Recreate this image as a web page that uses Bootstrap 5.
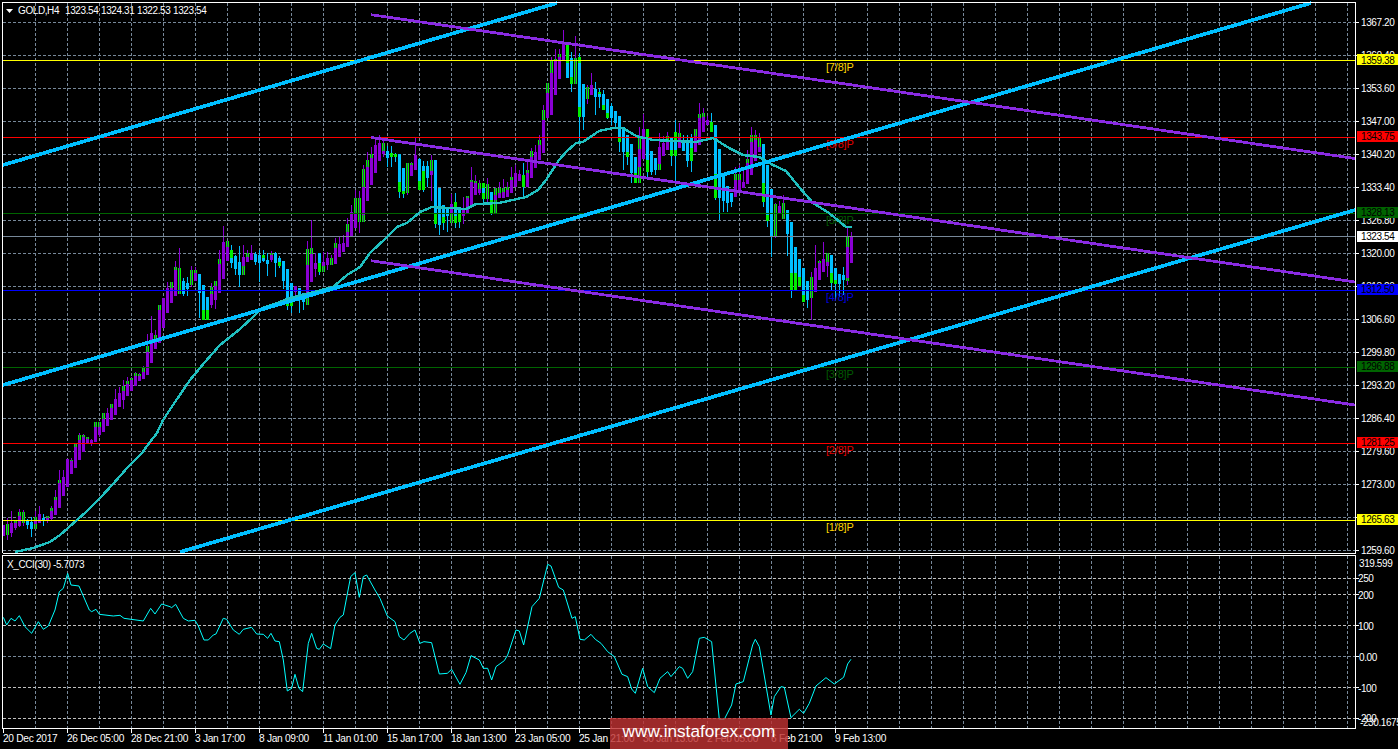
<!DOCTYPE html>
<html lang="en">
<head>
<meta charset="utf-8">
<title>GOLD,H4</title>
<link href="https://cdn.jsdelivr.net/npm/bootstrap@5.3.0/dist/css/bootstrap.min.css" rel="stylesheet">
<style>
html,body{background:#000;margin:0;height:749px;overflow:hidden}
.mt-shell{width:1398px;height:749px;background:#000}
.mt-pane{display:block;flex:none;overflow:visible}
.mt-pane text{font-family:"Liberation Sans",Arial,sans-serif;font-size:10px;letter-spacing:-.4px;fill:#fff;dominant-baseline:central;transform:translateY(.6px)}
.mt-pane text.tag{fill:#000}
.mt-pane text.lvl{font-size:11px;letter-spacing:-.2px;transform:translateY(-.4px)}
.crisp{shape-rendering:crispEdges}
.time-row{height:20px;padding-left:3px;font-family:"Liberation Sans",Arial,sans-serif;font-size:10.2px;letter-spacing:-.3px;color:#fff;line-height:1}
.time-cell{width:64px;flex:none;position:relative;padding-top:5px;white-space:nowrap}
.time-cell::before{content:"";position:absolute;left:0;top:0;width:1px;height:4px;background:#fff}
.stamp{left:610px;top:718px;width:178px;height:31px;background:rgba(190,50,50,.82);color:#fff;font-family:"Liberation Sans",Arial,sans-serif;font-size:17.2px;line-height:1;padding-bottom:3px}
</style>
</head>
<body>
<main class="mt-shell d-flex flex-column position-relative">
<svg class="mt-pane" width="1398" height="554" viewBox="0 0 1398 554">
  <g id="mainGrid" class="crisp"></g>
  <g id="candles" class="crisp"></g>
  <g class="crisp" stroke-width="1">
    <path d="M3 60.5H1355" stroke="#ffff00"/>
    <path d="M3 137.5H1355" stroke="#ff0000"/>
    <path d="M3 213.5H1355" stroke="#006400"/>
    <path d="M3 236.5H1355" stroke="#778899"/>
    <path d="M3 290.5H1355" stroke="#0000ff"/>
    <path d="M3 367.5H1355" stroke="#006400"/>
    <path d="M3 443.5H1355" stroke="#ff0000"/>
    <path d="M3 520.5H1355" stroke="#ffff00"/>
  </g>
  <g>
    <text class="lvl" x="826" y="67" style="fill:#ffd700">[7/8]P</text>
    <text class="lvl" x="826" y="144" style="fill:#e00000">[6/8]P</text>
    <text class="lvl" x="826" y="220" style="fill:#005a00">[5/8]P</text>
    <text class="lvl" x="826" y="297" style="fill:#0000e0">[4/8]P</text>
    <text class="lvl" x="826" y="374" style="fill:#005a00">[3/8]P</text>
    <text class="lvl" x="826" y="450" style="fill:#e00000">[2/8]P</text>
    <text class="lvl" x="826" y="527" style="fill:#ffd700">[1/8]P</text>
  </g>
  <polyline class="crisp" fill="none" stroke="#20c0c0" stroke-width="2.4" points="15,552 33,548 50,542 60,535 68,528 77,520 87,511 100,498 113,484 128,467 142,453 150,442 157,433 163,420 173,405 190,380 205,362 220,345 240,329 253,317 262,308 277,303 290,298 310,293 333,287 347,275 360,267 370,253 387,237 397,227 407,223 420,212 432,207 466,209 476,204 499,203 526,197 538,190 546,180 559,160 566,152 576,143 583,142 599,131 613,128 623,128 636,136 653,140 696,142 713,138 729,148 743,155 759,157 773,165 786,171 799,187 813,203 829,213 846,227 852,227"/>
  <g class="crisp" fill="none" stroke="#00bfff" stroke-width="3.7">
    <path d="M3 165L557 3"/>
    <path d="M3 385L1311 3"/>
    <path d="M180 552L1355 210"/>
  </g>
  <g class="crisp" fill="none" stroke="#8a2be2" stroke-width="2.8">
    <path d="M371 14.7L1355 158.5"/>
    <path d="M371 137.5L1355 282"/>
    <path d="M371 260.7L1355 405"/>
  </g>
  <g class="crisp" fill="none" stroke="#fff" stroke-width="1">
    <path d="M2.5 553V2.5H1355.5V553.5H2.5"/>
  </g>
  <g id="mainTicks" class="crisp"></g>
  <path d="M6 9H13L9.500 13Z" fill="#fff"/>
  <text x="18" y="10">GOLD,H4</text>
  <text x="65" y="10">1323.54</text>
  <text x="101" y="10">1324.31</text>
  <text x="137" y="10">1322.53</text>
  <text x="173" y="10">1323.54</text>
  <text x="1361" y="22">1367.20</text>
  <text x="1361" y="55">1360.40</text>
  <text x="1361" y="88">1353.60</text>
  <text x="1361" y="121">1347.00</text>
  <text x="1361" y="154">1340.20</text>
  <text x="1361" y="187">1333.40</text>
  <text x="1361" y="220">1326.80</text>
  <text x="1361" y="253">1320.00</text>
  <text x="1361" y="286">1313.20</text>
  <text x="1361" y="319">1306.60</text>
  <text x="1361" y="352">1299.80</text>
  <text x="1361" y="385">1293.20</text>
  <text x="1361" y="418">1286.40</text>
  <text x="1361" y="451">1279.60</text>
  <text x="1361" y="484">1273.00</text>
  <text x="1361" y="550">1259.60</text>
  <g class="crisp">
    <rect x="1357" y="54" width="41" height="11" fill="#ffff00"/>
    <rect x="1357" y="131" width="41" height="11" fill="#ff0000"/>
    <rect x="1357" y="207" width="41" height="11" fill="#006400"/>
    <rect x="1357" y="231" width="41" height="11" fill="#ffffff"/>
    <rect x="1357" y="284" width="41" height="11" fill="#0000ff"/>
    <rect x="1357" y="361" width="41" height="11" fill="#006400"/>
    <rect x="1357" y="437" width="41" height="11" fill="#ff0000"/>
    <rect x="1357" y="514" width="41" height="11" fill="#ffff00"/>
  </g>
  <text class="tag" x="1361" y="59.500">1359.38</text>
  <text class="tag" x="1361" y="136">1343.75</text>
  <text class="tag" x="1361" y="212">1328.13</text>
  <text class="tag" x="1361" y="236">1323.54</text>
  <text class="tag" x="1361" y="289">1312.50</text>
  <text class="tag" x="1361" y="366">1296.88</text>
  <text class="tag" x="1361" y="442">1281.25</text>
  <text class="tag" x="1361" y="519">1265.63</text>
</svg>
<svg class="mt-pane" width="1398" height="175" viewBox="0 554 1398 175">
  <g id="subGrid" class="crisp"></g>
  <polyline transform="translate(0 540) scale(.3333)" vector-effect="non-scaling-stroke" fill="none" stroke="#00ffff" stroke-width="1" points="10,232 20,255 33,235 45,243 58,227 75,260 95,280 115,245 130,268 145,258 165,210 178,155 190,145 203,100 213,135 237,138 268,210 275,215 288,208 298,223 340,228 360,226 372,235 430,243 452,205 465,222 485,192 510,200 515,203 527,193 550,235 565,243 585,241 595,258 612,300 625,300 640,285 648,282 670,235 680,238 700,270 718,283 730,268 755,262 770,282 790,283 803,295 813,280 825,303 838,305 850,360 862,453 875,445 885,403 897,445 908,455 925,310 935,280 950,325 958,328 970,312 992,326 1005,255 1020,232 1030,225 1052,110 1065,98 1078,172 1090,110 1100,105 1125,150 1140,175 1162,228 1185,245 1198,290 1212,300 1230,280 1245,270 1260,310 1272,305 1295,308 1318,402 1342,400 1355,388 1380,433 1398,398"/>
  <polyline transform="translate(466 540) scale(.3333)" vector-effect="non-scaling-stroke" fill="none" stroke="#00ffff" stroke-width="1" points="0,398 15,347 40,360 52,385 65,385 77,420 90,380 115,362 125,345 150,270 160,273 173,315 198,200 220,175 245,73 255,78 278,142 292,150 318,235 328,230 342,298 355,300 375,283 388,298 405,310 425,335 445,350 468,403 485,410 497,447 508,460 530,385 545,440 565,458 582,415 605,395 615,410 640,380 650,385 665,415 680,395 700,295 715,292 737,305 760,538 775,538 797,495 810,432 832,425 860,315 868,298 880,320 915,525 925,470 945,440 955,442 975,533 1000,508 1013,520 1030,490 1050,438 1080,413 1105,432 1133,412 1145,372 1155,358"/>
  <path class="crisp" d="M2.500 728.500V555.500H1355.500V728.500H2.500" fill="none" stroke="#fff"/>
  <g id="subTicks" class="crisp"></g>
  <text x="7" y="564">X_CCI(30) -5.7073</text>
  <text x="1359" y="563">319.599</text>
  <text x="1358" y="578">250</text>
  <text x="1358" y="594.500">200</text>
  <text x="1358" y="625.500">100</text>
  <text x="1359" y="656.500">0.00</text>
  <text x="1358" y="687.500">-100</text>
  <text x="1358" y="718">-200</text>
  <text x="1360" y="721.500">-230.1675</text>
</svg>
<div class="time-row d-flex">
  <span class="time-cell">20 Dec 2017</span>
  <span class="time-cell">26 Dec 05:00</span>
  <span class="time-cell">28 Dec 21:00</span>
  <span class="time-cell">3 Jan 17:00</span>
  <span class="time-cell">8 Jan 09:00</span>
  <span class="time-cell">11 Jan 01:00</span>
  <span class="time-cell">15 Jan 17:00</span>
  <span class="time-cell">18 Jan 13:00</span>
  <span class="time-cell">23 Jan 05:00</span>
  <span class="time-cell">25 Jan 21:00</span>
  <span class="time-cell">30 Jan 13:00</span>
  <span class="time-cell">2 Feb 05:00</span>
  <span class="time-cell">6 Feb 21:00</span>
  <span class="time-cell">9 Feb 13:00</span>
</div>
<div class="stamp position-absolute d-flex align-items-center justify-content-center">www.instaforex.com</div>
</main>
<script>
var NS="http://www.w3.org/2000/svg";
function add(p,tag,a){var e=document.createElementNS(NS,tag);for(var k in a)e.setAttribute(k,a[k]);p.appendChild(e);return e;}
var data="p 525 536 525 536;p 518 540 524 535 524 535;p 511 537 523 533;p 520 530 520 528 520 523;p 509 527 512 526 512 516;p 510 526 512 523 512 523;b 519 529 520 525;b 517 537 522 529;p 511 529 517 529 517 520 524 529;p 506 523 514 523;b 514 526 518 521;p 516 523 516 520 516 518;p 506 520 508 519 508 511;p 490 515 497 515 497 500;p 470 508 480 508 480 483;p 470 496 477 496;p 459 487 459 487;p 458 474 460 474 460 461;p 444 468 443 468 443 447;p 433 460 435 460 435 440;p 434 452 435 452 435 437;p 437 444 437 444 437 439;p 439 446 440 443;p 422 442 422 442 422 427;p 422 437 422 435 422 427;p 413 432 413 432 413 419;p 408 426 413 426;p 404 420 404 420 404 408;p 389 415 399 415;p 387 407 393 407;p 380 409 386 400 386 391;p 377 396 381 396 381 384;p 377 391 378 391 378 380;p 372 386 373 386 373 376;p 373 381 374 381 374 376;p 366 379 368 379 368 372;p 334 375 346 375 346 352;p 316 363 333 363;p 330 349 335 349 335 339;p 305 343 305 343 305 310;p 298 328 298 328;p 282 313 288 313;p 282 303 282 303 282 288;p 261 296 267 296 267 270;p 248 294 268 294 268 294;b 278 296 281 294;b 277 296 283 289;p 266 287 270 285 270 285;p 267 281 270 281 270 273;b 274 318 274 293;b 285 320 285 320 310 320;b 297 320 297 320 310 320;p 283 308 287 305 287 294;p 281 309 281 300 281 286;p 250 293 259 293 259 264;p 226 279 242 279;p 241 261 241 261 241 247;b 245 268 250 263 250 258;b 255 275 256 269;b 246 287 262 275;p 245 275 257 275 266 275;p 250 262 253 262 253 257;p 245 260 253 260;b 252 265 254 262;b 250 282 255 263;b 250 262 255 261 255 258;b 253 276 260 264;p 251 262 253 260 253 255;b 252 277 253 263;b 256 268 258 266 262 266;b 261 289 261 281;b 269 310 269 306 298 306;b 283 313 283 306 297 306;p 286 295 286 292;b 288 313 288 300;b 293 310 293 302;p 241 305 249 305 249 265 295 305;p 220 282 248 282 248 254;p 253 277 263 269;b 253 275 253 272 263 272;p 252 272 262 272 266 272;p 252 270 258 265;p 255 265 258 265 258 265;p 238 264 243 264 243 248;p 237 257 244 257;p 235 252 243 252;p 218 247 224 247 224 232;p 205 237 212 237;p 190 228 198 228 198 213;p 191 233 198 222 198 222;p 165 222 169 222 169 187 215 222;p 152 201 160 201 160 167;p 147 185 154 185 154 158;p 138 173 145 173;p 135 161 143 161;p 138 157 143 154 143 151;b 146 167 151 158;b 146 167 153 157 153 157;b 153 162 154 157 154 157;b 154 198 154 192 182 192;b 168 198 168 194 191 194;p 163 195 163 193 163 193;p 162 176 163 176 163 165;p 138 170 155 170;b 158 190 159 190 181 190;b 161 192 166 190 171 190;b 161 187 166 178;p 155 201 160 175 160 171;b 160 228 160 224 213 224;b 188 235 188 225;b 205 230 205 223 217 223;b 207 232 207 216;p 194 223 204 223 213 223;b 193 228 202 223 202 209 216 223;b 209 228 209 222 214 222;p 197 224 209 216;p 196 213 196 213 196 198;p 167 206 180 206 180 182;p 175 195 181 195 181 183;p 180 195 183 193 183 189;b 183 203 183 199 183 188 193 199;p 178 203 184 199 184 199;b 192 215 192 213 200 213;p 187 213 188 213 188 195 200 213;p 182 198 188 198 188 193;p 179 198 188 198 188 192;p 182 197 187 197 187 190;p 167 193 177 193 177 180;p 165 187 173 187;p 170 181 174 181;b 163 198 175 187 175 187;p 160 187 170 187 170 173;p 148 178 151 178 151 157;p 145 168 152 168;p 135 160 140 160 140 145;p 105 153 110 153 110 120;p 83 118 83 118 83 93;p 57 115 60 115 60 73;p 49 95 59 95 59 61;p 49 79 54 79 54 57;p 30 60 43 60;b 44 78 44 78 44 63;b 52 92 58 84 77 84;p 36 84 58 84 58 84;b 53 143 57 117 57 63 107 117;b 84 130 84 117;p 85 104 87 99 87 99;p 73 95 85 95;b 82 115 89 97;b 88 108 92 97 92 94;b 90 110 94 110 105 110;b 99 119 99 118 113 118;b 103 125 106 118;b 111 128 111 123;b 116 152 116 142 137 142;b 127 170 127 152;b 135 165 135 157 152 157;b 144 183 144 173;b 157 183 157 183 173 183;p 127 183 137 183 137 149 167 183;p 114 159 129 159;b 129 178 129 172 129 137 160 172;b 151 175 151 172;b 158 175 158 170;p 133 170 147 170 164 170;p 136 156 143 156;p 132 150 136 150 136 140;b 137 166 137 156 150 156;b 120 183 132 156 132 141 150 156;p 123 148 133 148 133 138;b 135 151 141 151;b 135 167 142 161;b 134 172 138 161 148 161;p 129 152 129 152 129 136;p 103 145 114 145 114 118;p 108 132 113 132 113 117;p 116 125 120 125;b 113 132 122 132 122 132;b 125 200 125 198 174 198;b 149 220 149 198;b 173 212 173 201;b 186 212 186 203;b 193 207 193 202;p 167 197 174 197 174 180;p 165 190 174 190 174 180;p 170 188 182 188;p 150 184 159 184 159 163;p 127 175 135 175 135 142;p 130 161 135 161 135 140;p 133 152 137 152 137 147;b 144 207 144 202 183 202;b 165 227 165 221 215 221;b 189 257 189 236;p 203 238 204 237 204 237;p 201 213 206 213;p 195 219 203 219 203 219;b 210 256 210 234;b 222 298 222 290 273 290;b 247 290 247 290 273 290;b 259 286 259 286 277 286;b 268 302 268 302 295 302;b 281 308 281 300;p 272 320 277 298 277 298;p 245 292 268 292;p 260 280 261 280 261 263;p 242 272 259 272;p 253 277 253 266 253 262;b 255 290 255 283 273 283;b 268 298 268 284 280 284;b 274 297 274 284;b 267 295 275 280;p 226 285 236 281 236 247 278 281;p 232 263 236 263".split(";");
var c=document.getElementById("candles"),PUR="#8a00d4",BLU="#00bfff",GRN="#00ee00";
data.forEach(function(row,i){
  var f=row.split(" "),n=f.slice(1).map(Number),col=f[0]=="p"?PUR:BLU,x=3+4*i;
  add(c,"rect",{x:x,y:n[0],width:1,height:n[1]-n[0],fill:col});
  add(c,"rect",{x:x-1,y:n[2],width:3,height:n[3]-n[2],fill:col});
  for(var g=4;g+1<n.length;g+=2){
    add(c,"rect",{x:x-1,y:n[g],width:3,height:n[g+1]-n[g],fill:GRN});
    if(f[0]=="p")add(c,"rect",{x:x,y:n[g],width:1,height:n[g+1]-n[g],fill:"#4a2a80"});
  }
});
function grid(g,y0,y1,hs){
  var d="";
  for(var x=35;x<1355;x+=32)d+="M"+(x+.5)+" "+y0+"V"+y1;
  add(g,"path",{d:d,stroke:"#778899","stroke-dasharray":"3 2",fill:"none"});
  hs.forEach(function(h){add(g,"path",{d:"M3 "+(h[0]+.5)+"H1355",stroke:h[1],"stroke-dasharray":"3 2",fill:"none"});});
}
var mh=[];for(var y=22;y<=550;y+=33)mh.push([y,"#778899"]);
grid(document.getElementById("mainGrid"),3,553,mh);
grid(document.getElementById("subGrid"),556,728,[[578,"#c0c0c0"],[594,"#c0c0c0"],[625,"#c0c0c0"],[656,"#778899"],[687,"#c0c0c0"],[718,"#c0c0c0"]]);
function ticks(g,ys){ys.forEach(function(y){add(g,"path",{d:"M1356 "+(y+.5)+"H1359",stroke:"#fff"});});}
var mt=[];for(var t=22;t<=550;t+=33)mt.push(t);
ticks(document.getElementById("mainTicks"),mt);
ticks(document.getElementById("subTicks"),[578,594,625,656,687,718]);
</script>
<script src="https://cdn.jsdelivr.net/npm/bootstrap@5.3.0/dist/js/bootstrap.bundle.min.js"></script>
</body>
</html>
